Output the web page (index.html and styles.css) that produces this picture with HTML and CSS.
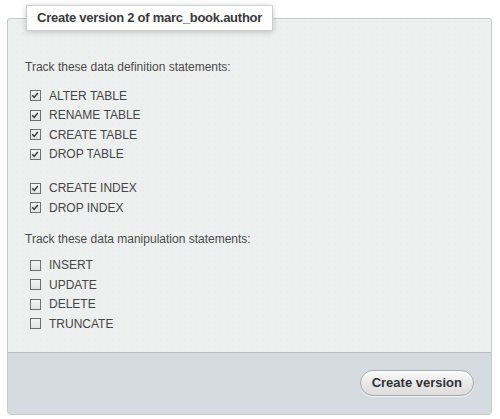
FILE: index.html
```html
<!DOCTYPE html>
<html>
<head>
<meta charset="utf-8">
<link rel="stylesheet" href="styles.css">
</head>
<body>
<fieldset class="panel">
  <legend class="title">Create version 2 of marc_book.author</legend>
  <div class="body">
    <p class="heading first">Track these data definition statements:</p>
    <div class="group">
      <div class="row"><span class="cb on"><svg viewBox="0 0 11 11" width="11" height="11"><path d="M2.5 5.2 L4.6 7.6 L8.6 2.8" fill="none" stroke="#3a3a3a" stroke-width="1.6"/></svg></span>ALTER TABLE</div>
      <div class="row"><span class="cb on"><svg viewBox="0 0 11 11" width="11" height="11"><path d="M2.5 5.2 L4.6 7.6 L8.6 2.8" fill="none" stroke="#3a3a3a" stroke-width="1.6"/></svg></span>RENAME TABLE</div>
      <div class="row"><span class="cb on"><svg viewBox="0 0 11 11" width="11" height="11"><path d="M2.5 5.2 L4.6 7.6 L8.6 2.8" fill="none" stroke="#3a3a3a" stroke-width="1.6"/></svg></span>CREATE TABLE</div>
      <div class="row"><span class="cb on"><svg viewBox="0 0 11 11" width="11" height="11"><path d="M2.5 5.2 L4.6 7.6 L8.6 2.8" fill="none" stroke="#3a3a3a" stroke-width="1.6"/></svg></span>DROP TABLE</div>
    </div>
    <div class="group second">
      <div class="row"><span class="cb on"><svg viewBox="0 0 11 11" width="11" height="11"><path d="M2.5 5.2 L4.6 7.6 L8.6 2.8" fill="none" stroke="#3a3a3a" stroke-width="1.6"/></svg></span>CREATE INDEX</div>
      <div class="row"><span class="cb on"><svg viewBox="0 0 11 11" width="11" height="11"><path d="M2.5 5.2 L4.6 7.6 L8.6 2.8" fill="none" stroke="#3a3a3a" stroke-width="1.6"/></svg></span>DROP INDEX</div>
    </div>
    <p class="heading second-heading">Track these data manipulation statements:</p>
    <div class="group">
      <div class="row"><span class="cb"></span>INSERT</div>
      <div class="row"><span class="cb"></span>UPDATE</div>
      <div class="row"><span class="cb"></span>DELETE</div>
      <div class="row"><span class="cb"></span>TRUNCATE</div>
    </div>
  </div>
  <div class="footer">
    <button class="btn">Create version</button>
  </div>
</fieldset>
</body>
</html>
```
FILE: styles.css
```css
html, body {
  margin: 0;
  padding: 0;
  background: #ffffff;
}
body {
  font-family: "Liberation Sans", Arial, sans-serif;
  color: #454545;
}
.panel {
  margin: 5px 0 0 7px;
  padding: 0;
  width: 485px;
  box-sizing: border-box;
  min-inline-size: 0;
  border: 1px solid #c8c9c9;
  border-radius: 3px 3px 4px 4px;
  background-color: #eef0ef;
  background-image: radial-gradient(circle, #e6e8e7 0.5px, transparent 0.8px);
  background-size: 6px 6px;
  overflow: visible;
}
.title {
  margin-left: 18px;
  padding: 4px 10px;
  line-height: 16px;
  font-size: 13px;
  letter-spacing: -0.25px;
  font-weight: bold;
  color: #3a3a3a;
  background: #ffffff;
  border: 1px solid #cdcdcd;
  box-shadow: 0 1px 6px rgba(0, 0, 0, 0.2);
}
.body {
  padding: 28px 0 18px 17px;
}
.heading {
  margin: 0;
  font-size: 12px;
  line-height: 16px;
  color: #4a4a4a;
}
.heading.first {
  margin-bottom: 11px;
}
.heading.second-heading {
  margin-top: 13px;
  margin-bottom: 9px;
}
.group {
  padding-left: 5px;
}
.group.second {
  margin-top: 14.5px;
}
.row {
  display: flex;
  align-items: center;
  height: 19.5px;
  font-size: 12px;
  color: #454545;
}
.cb {
  display: inline-flex;
  width: 11px;
  height: 11px;
  box-sizing: border-box;
  border: 1px solid #707070;
  background: linear-gradient(#f4f4f4, #e2e2e2);
  margin-right: 8px;
}
.cb svg {
  margin: -1px 0 0 -1px;
}
.footer {
  display: flex;
  justify-content: flex-end;
  align-items: flex-start;
  height: 62px;
  box-sizing: border-box;
  padding: 17px 17px 0 0;
  border-top: 1px solid #b9bec3;
  background: #d6dbe1;
  border-radius: 0 0 3px 3px;
}
.btn {
  font-family: "Liberation Sans", Arial, sans-serif;
  font-size: 13px;
  font-weight: bold;
  color: #333333;
  height: 26px;
  padding: 0 11px;
  border: 1px solid #a9abad;
  border-radius: 13px;
  background: linear-gradient(#fbfbfb, #e6e6e6 60%, #dcdcdc);
  box-shadow: 0 1px 1px rgba(255, 255, 255, 0.7);
  cursor: pointer;
}
```
